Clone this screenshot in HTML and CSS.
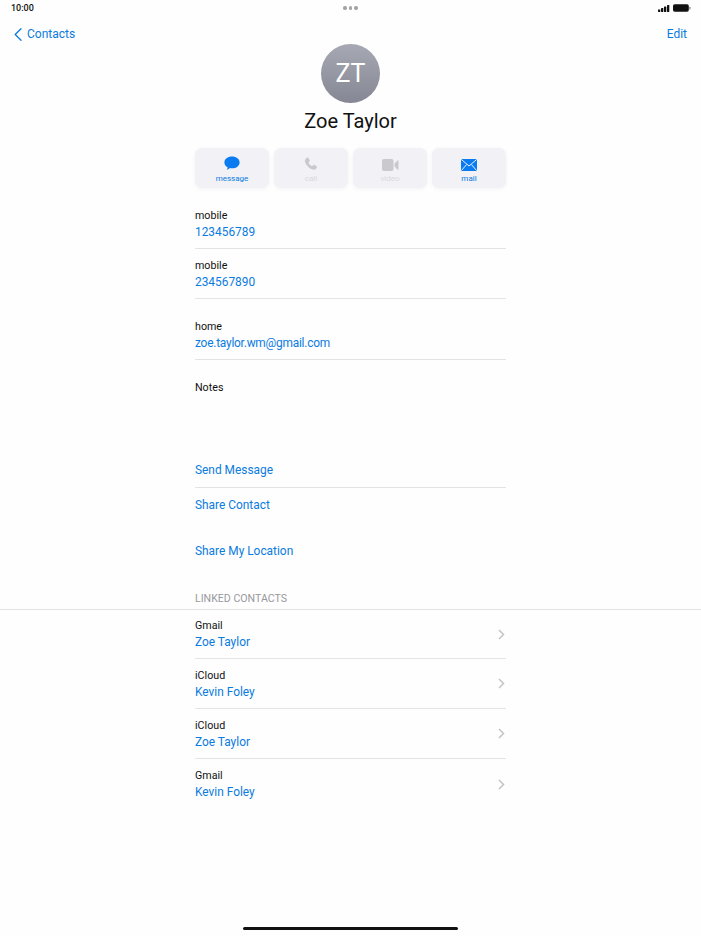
FILE: index.html
```html
<!DOCTYPE html>
<html lang="en">
<head>
<meta charset="utf-8">
<title>Zoe Taylor</title>
<link rel="stylesheet" href="styles.css">
</head>
<body>
<div class="screen">
  <div class="status">
    <span class="time">10:00</span>
    <span class="dots"><i></i><i></i><i></i></span>
    <span class="indicators">
      <svg width="12" height="7" viewBox="0 0 12 7"><rect x="0" y="4.400" width="2.300" height="2.600" rx=".4"/><rect x="3" y="3" width="2.300" height="4" rx=".4"/><rect x="6" y="1.500" width="2.300" height="5.500" rx=".4"/><rect x="9" y="0" width="2.300" height="7" rx=".4"/></svg>
      <svg width="18" height="8" viewBox="0 0 18 8"><rect x="0" y="0.300" width="15.800" height="7.400" rx="1.800"/><rect x="16.300" y="2.800" width="1.200" height="2.600" rx=".5" opacity=".5"/></svg>
    </span>
  </div>
  <nav class="nav">
    <a class="nav-link back">
      <svg width="8" height="13" viewBox="0 0 8 13"><path d="M7 .8 1.200 6.500 7 12.200" fill="none" stroke="#0a7be0" stroke-width="1.300" stroke-linecap="round" stroke-linejoin="round"/></svg>
      Contacts
    </a>
    <a class="nav-link">Edit</a>
  </nav>
  <header class="hero">
    <div class="avatar">ZT</div>
    <h1 class="name">Zoe Taylor</h1>
  </header>
  <div class="column">
    <div class="actions">
      <div class="action">
        <svg width="16" height="15" viewBox="0 0 16 15"><path fill="#0a7bf0" d="M8 .5c4.300 0 7.600 2.600 7.600 5.900S12.300 12.300 8 12.300c-.7 0-1.400-.1-2-.2-.8.8-2 1.500-3.300 1.700.5-.7.9-1.500 1-2.400C1.800 10.300.4 8.500.4 6.400.4 3.100 3.700.5 8 .5z"/></svg>
        <span>message</span>
      </div>
      <div class="action off">
        <svg width="14" height="14" viewBox="0 0 14 14"><path fill="#c9c9ce" d="M3.100.7c.5-.3 1-.2 1.300.3l1.300 2.200c.3.500.2 1-.2 1.400l-.8.700c-.2.200-.2.400-.1.700.7 1.300 1.700 2.400 3.100 3.100.3.100.5.100.7-.1l.7-.8c.4-.4.900-.5 1.400-.2l2 1.200c.5.300.6.800.4 1.300-.5 1.300-1.600 2.300-3 2.200C5.500 12.300 1.400 8 .9 4.100.8 2.700 1.800 1.300 3.100.7z"/></svg>
        <span>call</span>
      </div>
      <div class="action off">
        <svg width="17" height="12" viewBox="0 0 17 12"><rect x="0" y="0" width="11.500" height="12" rx="2" fill="#c9c9ce"/><path fill="#c9c9ce" d="M12.600 4.500 15.500 1.500c.5-.4 1-.2 1 .4v8.200c0 .6-.5.8-1 .4l-2.900-3z"/></svg>
        <span>video</span>
      </div>
      <div class="action">
        <svg width="16" height="12" viewBox="0 0 16 12"><rect width="16" height="12" rx="1.500" fill="#0a7bf0"/><path d="M.6.700 8 7l7.400-6.300M.6 11.300 5.600 5.500M15.400 11.300l-5-5.800" fill="none" stroke="#fff" stroke-width=".9"/></svg>
        <span>mail</span>
      </div>
    </div>

    <div class="field first"><span class="label">mobile</span><span class="value">123456789</span></div>
    <div class="field"><span class="label">mobile</span><span class="value">234567890</span></div>
    <div class="field email"><span class="label">home</span><span class="value">zoe.taylor.wm@gmail.com</span></div>
    <div class="notes"><span class="label">Notes</span></div>

    <div class="cmd rule">Send Message</div>
    <div class="cmd">Share Contact</div>
    <div class="cmd location">Share My Location</div>
  </div>

  <div class="section-head"><span>LINKED CONTACTS</span></div>
  <div class="column">
    <div class="linked top"><div class="stack"><span class="label">Gmail</span><span class="value">Zoe Taylor</span></div><svg class="chev" width="7" height="11" viewBox="0 0 7 11"><path d="M1 1l4.500 4.500L1 10" fill="none" stroke="#c4c4c8" stroke-width="1.500"/></svg></div>
    <div class="linked"><div class="stack"><span class="label">iCloud</span><span class="value">Kevin Foley</span></div><svg class="chev" width="7" height="11" viewBox="0 0 7 11"><path d="M1 1l4.500 4.500L1 10" fill="none" stroke="#c4c4c8" stroke-width="1.500"/></svg></div>
    <div class="linked"><div class="stack"><span class="label">iCloud</span><span class="value">Zoe Taylor</span></div><svg class="chev" width="7" height="11" viewBox="0 0 7 11"><path d="M1 1l4.500 4.500L1 10" fill="none" stroke="#c4c4c8" stroke-width="1.500"/></svg></div>
    <div class="linked last"><div class="stack"><span class="label">Gmail</span><span class="value">Kevin Foley</span></div><svg class="chev" width="7" height="11" viewBox="0 0 7 11"><path d="M1 1l4.500 4.500L1 10" fill="none" stroke="#c4c4c8" stroke-width="1.500"/></svg></div>
  </div>
  <div class="home-bar"></div>
</div>
</body>
</html>
```
FILE: styles.css
```css
* { box-sizing: border-box; }
html, body { margin: 0; padding: 0; }
body { background: #fefefe; font-family: "Roboto", "Liberation Sans", sans-serif; color: #000; }
.screen { position: relative; width: 701px; height: 936px; overflow: hidden; display: flex; flex-direction: column; }

.status { height: 16px; padding: 0 10px 0 11px; display: flex; align-items: center; justify-content: space-between; position: relative; }
.time { font-size: 9px; font-weight: 500; color: #111; line-height: 16px; }
.dots { position: absolute; left: 343px; top: 6px; display: flex; gap: 2px; }
.dots i { width: 3.500px; height: 3.500px; border-radius: 50%; background: #a3a3a8; }
.indicators { display: flex; align-items: center; gap: 3px; fill: #111; }

.nav { height: 20px; margin-top: 8px; padding: 0 14px; display: flex; justify-content: space-between; align-items: center; }
.nav-link { font-size: 12px; color: #0a7be0; display: flex; align-items: center; gap: 5px; }

.hero { display: flex; flex-direction: column; align-items: center; }
.avatar { width: 59px; height: 59px; border-radius: 50%; background: linear-gradient(#a6a8b3, #858794); color: #fff; font-size: 25px; line-height: 59px; text-align: center; }
.name { margin: 6px 0 0; font-size: 20px; font-weight: 400; line-height: 24px; color: #111; }

.column { width: 311px; margin-left: 195px; display: flex; flex-direction: column; }

.actions { display: grid; grid-template-columns: repeat(4, 74px); justify-content: space-between; margin-top: 15px; }
.action { height: 40px; border-radius: 7px; background: #f1f1f6; box-shadow: 0 1px 4px rgba(0,0,0,.05); display: flex; flex-direction: column; align-items: center; justify-content: flex-end; padding-bottom: 5px; gap: 3px; color: #0a7be0; font-size: 8px; line-height: 9px; }
.action.off { color: #d9d9dd; }

.label { font-size: 10.700px; line-height: 14px; color: #111; }
.value { font-size: 11.900px; line-height: 16px; color: #0a7be0; }
.field { height: 50px; display: flex; flex-direction: column; padding-top: 10px; border-bottom: 1px solid #e4e4e6; gap: 1px; }
.field.first { margin-top: 11px; }
.field.email { margin-top: 11px; }
.field.email .value { letter-spacing: -.22px; }
.notes { height: 80px; padding-top: 16px; }

.cmd { height: 35px; font-size: 11.900px; line-height: 35px; color: #0a7be0; }
.rule { border-bottom: 1px solid #e4e4e6; margin-top: 13px; height: 35px; line-height: 34px; }
.location { margin-top: 11px; }

.section-head { height: 29px; margin-top: 12px; padding: 11px 0 0 195px; border-bottom: 1px solid #e4e4e6; font-size: 10.600px; line-height: 14px; color: #98989d; }

.linked { height: 50px; display: flex; align-items: center; justify-content: space-between; border-bottom: 1px solid #e4e4e6; padding-right: 1px; }
.linked.top { height: 49px; }
.linked.last { border-bottom: 0; }
.stack { display: flex; flex-direction: column; gap: 1px; padding-top: 1px; }

.home-bar { position: absolute; left: 243px; top: 927px; width: 215px; height: 3px; border-radius: 2px; background: #111; }
```
